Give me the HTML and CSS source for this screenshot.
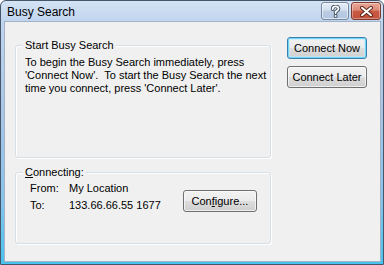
FILE: index.html
```html
<!DOCTYPE html>
<html>
<head>
<meta charset="utf-8">
<title>Busy Search</title>
<link rel="stylesheet" href="styles.css">
</head>
<body>
<div class="window">
  <div class="titlebar">
    <span class="title">Busy Search</span>
    <div class="cbtns">
      <span class="cbtn help">
        <svg width="11" height="13" viewBox="0 0 11 13">
          <path d="M2.6 4.2 C2.6 2 4 1.3 5.5 1.3 C7.2 1.3 8.5 2.3 8.5 3.8 C8.5 5.4 6.8 5.8 5.6 6.8 L5.6 8" fill="none" stroke="#3b4a5e" stroke-width="3.6" stroke-linecap="round"/>
          <rect x="3.8" y="9.3" width="3.6" height="3.4" rx="0.8" fill="#3b4a5e"/>
          <path d="M2.6 4.2 C2.6 2 4 1.3 5.5 1.3 C7.2 1.3 8.5 2.3 8.5 3.8 C8.5 5.4 6.8 5.8 5.6 6.8 L5.6 8" fill="none" stroke="#fff" stroke-width="1.8" stroke-linecap="round"/>
          <rect x="4.7" y="10.1" width="1.8" height="1.8" fill="#fff"/>
        </svg>
      </span>
      <span class="cbtn close">
        <svg width="13" height="11" viewBox="0 0 13 11">
          <path d="M2 1.8 L11 9.2 M11 1.8 L2 9.2" fill="none" stroke="#5a2318" stroke-width="3.8" stroke-linecap="round"/>
          <path d="M2 1.8 L11 9.2 M11 1.8 L2 9.2" fill="none" stroke="#fff" stroke-width="2" stroke-linecap="round"/>
        </svg>
      </span>
    </div>
  </div>
  <div class="client">
    <div class="groups">
      <fieldset class="group g1">
        <legend>Start Busy Search</legend>
        <p class="desc">To begin the Busy Search immediately, press<br>'Connect Now'.&nbsp; To start the Busy Search the next<br>time you connect, press 'Connect Later'.</p>
      </fieldset>
      <fieldset class="group g2">
        <legend><span class="ul">C</span>onnecting:</legend>
        <div class="conn">
          <div class="info">
            <span>From:</span><span>My Location</span>
            <span>To:</span><span>133.66.66.55 1677</span>
          </div>
          <button class="btn cfg">Con<span class="ul">f</span>igure...</button>
        </div>
      </fieldset>
    </div>
    <div class="actions">
      <button class="btn default">Connect Now</button>
      <button class="btn">Connect Later</button>
    </div>
  </div>
</div>
</body>
</html>
```
FILE: styles.css
```css
html, body {
  margin: 0;
  padding: 0;
}
body {
  background: #ffffff;
  width: 384px;
  height: 265px;
  overflow: hidden;
  font-family: "Liberation Sans", Arial, sans-serif;
  font-size: 11px;
  color: #000;
}
.window {
  box-sizing: border-box;
  width: 384px;
  height: 265px;
  border: 1px solid #46566b;
  border-radius: 6px 6px 0 0;
  background: linear-gradient(to bottom, #d4e3f4 0px, #c0d5ee 20px, #a9c5e6 110px, #86c4ec 200px, #45c2f0 265px);
  display: flex;
  flex-direction: column;
  padding: 0 2px 2px 3px;
}
.titlebar {
  height: 20px;
  flex: none;
  display: flex;
  justify-content: space-between;
  align-items: flex-start;
  padding-left: 3px;
}
.title {
  font-size: 12px;
  line-height: 17px;
  padding-top: 3px;
  color: #000;
}
.cbtns {
  display: flex;
  gap: 2px;
  margin-top: 1px;
}
.cbtn {
  box-sizing: border-box;
  height: 18px;
  border-radius: 3px;
  display: flex;
  align-items: center;
  justify-content: center;
}
.help {
  width: 28px;
  border: 1px solid #76889f;
  background: linear-gradient(to bottom, #e6eef8 0%, #d3e0ef 45%, #bccde3 50%, #b2c6e0 100%);
  box-shadow: inset 0 0 0 1px rgba(255,255,255,0.55);
}
.close {
  width: 30px;
  border: 1px solid #7d3a2e;
  background: linear-gradient(to bottom, #e9a898 0%, #dd8a77 45%, #c95a44 50%, #c1503a 100%);
  box-shadow: inset 0 0 0 1px rgba(255,255,255,0.35);
}
.client {
  flex: 1;
  border: 1px solid #a3b2c4;
  background: #f0f0f0;
  display: flex;
  align-items: flex-start;
  padding: 15px 0 0 10px;
  gap: 16px;
}
.groups {
  width: 256px;
  margin-top: 2px;
  display: flex;
  flex-direction: column;
  gap: 8px;
}
.group {
  box-sizing: border-box;
  width: 256px;
  margin: 0;
  border: 1px solid #d5dfe5;
  border-radius: 3px;
  box-shadow: inset 1px 1px 0 #ffffff, 1px 1px 0 #ffffff;
  padding: 0 9px;
  min-width: 0;
}
.group legend {
  padding: 0 2px;
  margin-left: -2px;
  line-height: 13px;
  font-size: 11px;
  background: #f0f0f0;
}
.g1 {
  height: 119px;
  padding-top: 4px;
}
.g2 {
  height: 78px;
  padding-top: 3px;
}
.desc {
  margin: 0;
  line-height: 13px;
  white-space: nowrap;
}
.ul {
  text-decoration: underline;
}
.conn {
  display: flex;
  align-items: flex-start;
  padding-left: 5px;
}
.info {
  width: 153px;
  display: grid;
  grid-template-columns: 39px auto;
  row-gap: 4px;
  line-height: 13px;
  white-space: nowrap;
}
.btn {
  box-sizing: border-box;
  width: 80px;
  height: 22px;
  padding: 0;
  font-family: "Liberation Sans", Arial, sans-serif;
  font-size: 11px;
  color: #000;
  border: 1px solid #707070;
  border-radius: 3px;
  background: linear-gradient(to bottom, #f2f2f2 0%, #ebebeb 48%, #dddddd 52%, #cfcfcf 100%);
  box-shadow: inset 0 0 0 1px rgba(252,252,252,0.7);
  white-space: nowrap;
}
.default {
  border-color: #3c7fb1;
  box-shadow: inset 0 0 0 1px #6fd6f8, inset 0 0 0 2px rgba(190,235,252,0.6);
}
.cfg {
  width: 74px;
  margin-top: 8px;
}
.actions {
  width: 80px;
  display: flex;
  flex-direction: column;
  gap: 7px;
}
```
